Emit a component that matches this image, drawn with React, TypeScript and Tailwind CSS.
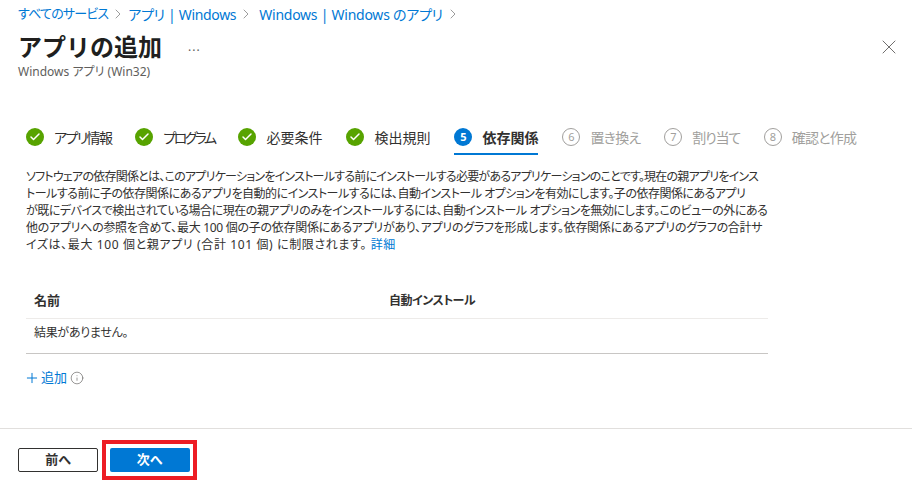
import { Check, ChevronRight, Info, Plus, X } from "lucide-react";

const done = [
  { label: "アプリ情報", cls: "tracking-[-1.6px]" },
  { label: "プログラム", cls: "tracking-[-2.6px]" },
  { label: "必要条件", cls: "" },
  { label: "検出規則", cls: "" },
];
const todo = [
  { n: 6, label: "置き換え", cls: "tracking-[-0.75px]" },
  { n: 7, label: "割り当て", cls: "tracking-[-1.25px]" },
  { n: 8, label: "確認と作成", cls: "tracking-[-0.8px]" },
];

const Sep = () => <ChevronRight className="w-[16px] h-[16px] text-[#777777] mx-[2px]" strokeWidth={1.1} />;

const App = () => {
  return (
    <div className="relative w-[912px] h-[487px] overflow-hidden bg-white text-[#323130] [font-feature-settings:'palt'] font-['Noto_Sans','Noto_Sans_CJK_JP',sans-serif]">
      <div className="flex items-center h-[16px] mt-[6px] ml-[18px] text-[14px] text-[#0078d4] whitespace-nowrap">
        <span className="text-[13px] tracking-[-0.8px]">すべてのサービス</span>
        <Sep />
        <span className="tracking-[-0.33px]">アプリ | Windows</span>
        <Sep />
        <span className="ml-[3px] tracking-[-0.25px]">Windows | Windows のアプリ</span>
        <Sep />
      </div>

      <div className="flex items-center justify-between mt-[10px] ml-[18px] mr-[11px] h-[30px]">
        <div className="flex items-center">
          <h1 className="text-[24px] leading-[30px] font-bold text-[#201f1e] [font-feature-settings:normal]">アプリの追加</h1>
          <span className="ml-[26px] text-[12px] text-[#605e5c] tracking-[1px]">...</span>
        </div>
        <X className="w-[24px] h-[24px] text-[#605e5c]" strokeWidth={0.9} />
      </div>
      <p className="ml-[18px] mt-[3px] text-[12px] leading-[14px] text-[#605e5c]">Windows アプリ (Win32)</p>

      <div className="flex items-start ml-[26px] mt-[49px] h-[29px] text-[14px] whitespace-nowrap">
        {done.map((s) => (
          <div key={s.label} className="flex items-center h-[18px] mr-[24px]">
            <span className="flex items-center justify-center w-[18px] h-[18px] rounded-full bg-[#57a300] mr-[10px]">
              <Check className="w-[12px] h-[12px] text-white" strokeWidth={3} />
            </span>
            <span className={s.cls}>{s.label}</span>
          </div>
        ))}
        <div className="flex flex-col mr-[24px]">
          <div className="flex items-center h-[18px]">
            <span className="flex items-center justify-center w-[18px] h-[18px] rounded-full bg-[#0078d4] text-white text-[11px] font-bold mr-[10px]">5</span>
            <span className="font-bold">依存関係</span>
          </div>
          <div className="h-[2px] mt-[7px] bg-[#0078d4]" />
        </div>
        {todo.map((s) => (
          <div key={s.n} className="flex items-center h-[18px] mr-[24px] text-[#a19f9d]">
            <span className="flex items-center justify-center w-[18px] h-[18px] rounded-full border border-[#a19f9d] text-[11px] mr-[10px]">{s.n}</span>
            <span className={s.cls}>{s.label}</span>
          </div>
        ))}
      </div>

      <div className="ml-[26px] mt-[11px] text-[12px] leading-[17px] whitespace-nowrap">
        <p className="tracking-[-0.76px]">ソフトウェアの依存関係とは、このアプリケーションをインストールする前にインストールする必要があるアプリケーションのことです。現在の親アプリをインス</p>
        <p className="tracking-[-0.5px]">トールする前に子の依存関係にあるアプリを自動的にインストールするには、自動インストール オプションを有効にします。子の依存関係にあるアプリ</p>
        <p className="tracking-[-0.46px]">が既にデバイスで検出されている場合に現在の親アプリのみをインストールするには、自動インストール オプションを無効にします。このビューの外にある</p>
        <p className="tracking-[-0.28px]">他のアプリへの参照を含めて、最大 100 個の子の依存関係にあるアプリがあり、アプリのグラフを形成します。依存関係にあるアプリのグラフの合計サ</p>
        <p className="tracking-[0.62px]">
          イズは、最大 100 個と親アプリ (合計 101 個) に制限されます。 <span className="text-[#0078d4]">詳細</span>
        </p>
      </div>

      <div className="ml-[26px] w-[742px] mt-[37px] text-[12px]">
        <div className="flex items-center h-[29px] pb-[6px] border-b border-[#edebe9] font-bold">
          <span className="w-[363px] pl-[8px] text-[13px]">名前</span>
          <span className="tracking-[-0.5px]">自動インストール</span>
        </div>
        <div className="flex items-center h-[35px] pb-[7px] pl-[8px] tracking-[-0.3px] border-b border-[#c8c6c4]">結果がありません。</div>
      </div>

      <div className="flex items-center ml-[24px] mt-[15px] h-[18px] text-[13px] text-[#0078d4]">
        <Plus className="w-[16px] h-[16px] mr-[1px]" strokeWidth={1.5} />
        <span>追加</span>
        <Info className="w-[14px] h-[14px] ml-[3px] text-[#605e5c]" strokeWidth={1.1} />
      </div>

      <div className="flex items-center h-[59px] mt-[41px] border-t border-[#e1dfdd] pl-[18px]">
        <button className="w-[80px] h-[24px] mt-[3px] border border-[#323130] rounded-[2px] text-[13px] font-bold">前へ</button>
        <div className="flex items-center justify-center w-[95px] h-[40px] mt-[3px] ml-[4px] border-[4px] border-[#ed1c24]">
          <button className="w-[80px] h-[24px] bg-[#0078d4] rounded-[2px] text-white text-[13px] font-bold">次へ</button>
        </div>
      </div>
    </div>
  );
};

export default App;
